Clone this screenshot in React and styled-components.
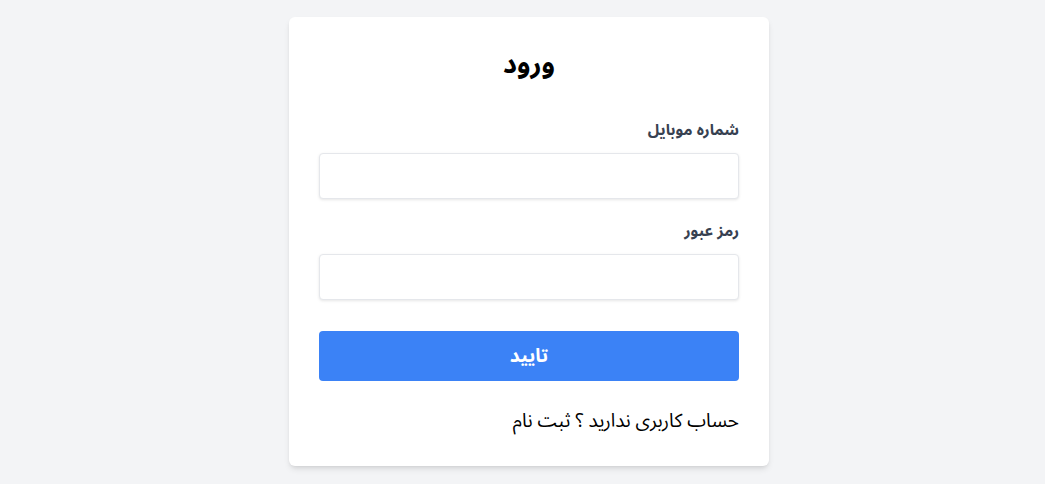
import React from "react";
import styled, { createGlobalStyle } from "styled-components";

const Global = createGlobalStyle`
  html, body { margin: 0; padding: 0; }
  body {
    background: #f3f4f6;
    font-family: "Noto Sans Arabic", "DejaVu Sans", sans-serif;
  }
  * { box-sizing: border-box; }
`;

const Page = styled.div`
  min-height: 100vh;
  display: flex;
  align-items: center;
  justify-content: center;
  padding: 0 0 2px 13px;
  direction: rtl;
`;

const Card = styled.form`
  width: 480px;
  background: #ffffff;
  border-radius: 6px;
  box-shadow: 0 4px 6px -1px rgba(0, 0, 0, 0.1), 0 2px 4px -2px rgba(0, 0, 0, 0.1);
  padding: 30px 30px 33px;
  display: flex;
  flex-direction: column;
`;

const Title = styled.h2`
  margin: 0 0 37px;
  text-align: center;
  font-size: 27px;
  line-height: 36px;
  font-weight: 700;
  color: #000;
`;

const Field = styled.div`
  display: flex;
  flex-direction: column;
  margin-bottom: ${(p) => p.$mb}px;
`;

const Label = styled.label`
  font-size: 15.5px;
  line-height: 20px;
  font-weight: 700;
  color: #374151;
  margin-bottom: 13px;
`;

const Input = styled.input`
  height: 46px;
  width: 100%;
  border: 1px solid #e5e7eb;
  border-radius: 4px;
  box-shadow: 0 1px 3px rgba(0, 0, 0, 0.1);
  background: #fff;
  outline: none;
  padding: 0 12px;
  font-family: inherit;
  font-size: 16px;
`;

const Button = styled.button`
  height: 50px;
  width: 100%;
  border: none;
  border-radius: 4px;
  background: #3b82f6;
  color: #fff;
  font-family: inherit;
  font-size: 19px;
  font-weight: 700;
  line-height: 24px;
  cursor: pointer;
`;

const Footer = styled.p`
  margin: 28px 0 0;
  font-size: 19px;
  line-height: 24px;
  color: #000;
  text-align: right;
`;

export default function App() {
  return (
    <>
      <Global />
      <Page>
        <Card onSubmit={(e) => e.preventDefault()}>
          <Title>ورود</Title>
          <Field $mb={22}>
            <Label>شماره موبایل</Label>
            <Input type="text" />
          </Field>
          <Field $mb={31}>
            <Label>رمز عبور</Label>
            <Input type="password" />
          </Field>
          <Button type="submit">تایید</Button>
          <Footer>حساب کاربری ندارید ؟ ثبت نام</Footer>
        </Card>
      </Page>
    </>
  );
}
